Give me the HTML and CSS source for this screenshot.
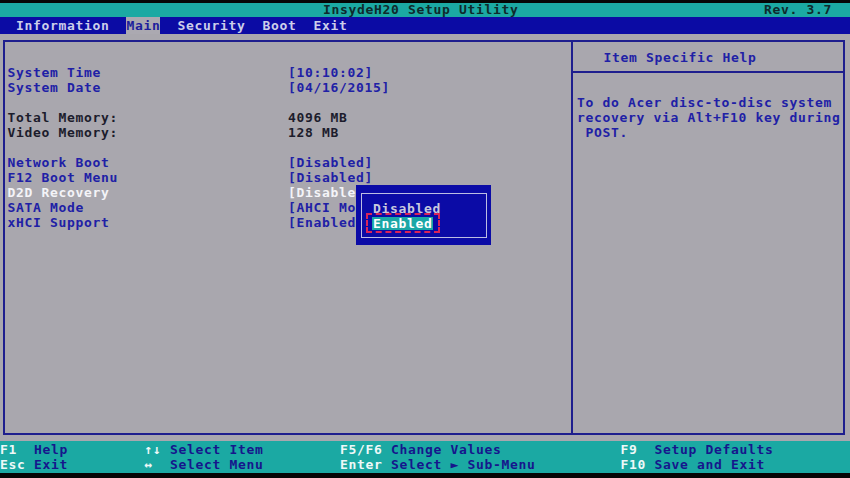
FILE: index.html
```html
<!DOCTYPE html>
<html>
<head>
<meta charset="utf-8">
<title>InsydeH20 Setup Utility</title>
<link rel="stylesheet" href="styles.css">
</head>
<body>
<div class="screen">
  <div class="edge-top"></div>
  <header class="titlebar">
    <span class="title">InsydeH20 Setup Utility</span>
    <span class="rev">Rev. 3.7</span>
  </header>
  <nav class="menubar">
    <span class="menu-item">Information</span>
    <span class="menu-item active">Main</span>
    <span class="menu-item">Security</span>
    <span class="menu-item">Boot</span>
    <span class="menu-item">Exit</span>
  </nav>
  <main class="workspace">
    <div class="frame">
      <section class="settings">
        <div class="group">
          <div class="row"><span class="label">System Time</span><span class="value">[10:10:02]</span></div>
          <div class="row"><span class="label">System Date</span><span class="value">[04/16/2015]</span></div>
        </div>
        <div class="group info">
          <div class="row"><span class="label">Total Memory:</span><span class="value">4096 MB</span></div>
          <div class="row"><span class="label">Video Memory:</span><span class="value">128 MB</span></div>
        </div>
        <div class="group">
          <div class="row"><span class="label">Network Boot</span><span class="value">[Disabled]</span></div>
          <div class="row"><span class="label">F12 Boot Menu</span><span class="value">[Disabled]</span></div>
          <div class="row selected"><span class="label">D2D Recovery</span><span class="value">[Disabled]</span></div>
          <div class="row"><span class="label">SATA Mode</span><span class="value">[AHCI Mode]</span></div>
          <div class="row"><span class="label">xHCI Support</span><span class="value">[Enabled]</span></div>
        </div>
        <div class="popup">
          <div class="popup-inner">
            <div class="option"><span class="opt-text">Disabled</span></div>
            <div class="option"><span class="opt-text current">Enabled</span></div>
          </div>
        </div>
      </section>
      <aside class="help">
        <div class="help-head">Item Specific Help</div>
        <div class="help-text">
          <div>To do Acer disc-to-disc system</div>
          <div>recovery via Alt+F10 key during</div>
          <div class="indent">POST.</div>
        </div>
      </aside>
    </div>
  </main>
  <footer class="keys">
    <span class="key">F1</span><span class="desc">Help</span>
    <span class="key">↑↓</span><span class="desc">Select Item</span>
    <span class="key">F5/F6</span><span class="desc">Change Values</span>
    <span class="key">F9</span><span class="desc">Setup Defaults</span>
    <span class="key">Esc</span><span class="desc">Exit</span>
    <span class="key">↔</span><span class="desc">Select Menu</span>
    <span class="key">Enter</span><span class="desc">Select ► Sub-Menu</span>
    <span class="key">F10</span><span class="desc">Save and Exit</span>
  </footer>
  <div class="edge-bottom"></div>
</div>
</body>
</html>
```

FILE: styles.css
```css
* {
  box-sizing: border-box;
  margin: 0;
  padding: 0;
}

html, body {
  width: 850px;
  height: 478px;
  overflow: hidden;
  background: #000;
}

body {
  font-family: "DejaVu Sans Mono", "Liberation Mono", monospace;
  font-size: 13px;
  font-weight: bold;
  letter-spacing: 0.67px;
  line-height: 15px;
  white-space: nowrap;
}

.screen {
  display: flex;
  flex-direction: column;
  width: 850px;
  height: 478px;
}

.edge-top {
  height: 3px;
  flex: none;
  background: #060606;
}

.edge-bottom {
  height: 5px;
  flex: none;
  background: #060606;
}

.titlebar {
  height: 14px;
  flex: none;
  line-height: 14px;
  background: #1ba9a3;
  color: #0f2a2c;
  display: flex;
  justify-content: space-between;
  padding: 0 18px 0 323px;
}

.menubar {
  height: 17px;
  flex: none;
  line-height: 17px;
  background: #0b0ba4;
  color: #ccceea;
  display: flex;
  gap: 17px;
  padding-left: 16px;
}

.menu-item.active {
  background: #aba9b1;
  color: #1d1d9c;
}

.workspace {
  height: 407px;
  flex: none;
  background: #a9a7ae;
  padding: 6px 5px 6px 3px;
}

.frame {
  height: 395px;
  border: 2px solid #1e1e8e;
  display: flex;
}

.settings {
  position: relative;
  width: 568px;
  flex: none;
  border-right: 2px solid #1e1e8e;
  padding: 23px 0 0 2.5px;
  display: flex;
  flex-direction: column;
  gap: 15px;
  color: #2020a6;
}

.row {
  display: flex;
  height: 15px;
}

.label {
  width: 280.5px;
  flex: none;
}

.info .row {
  color: #1c1c2c;
}

.row.selected {
  color: #f4f4f8;
}

.popup {
  position: absolute;
  left: 351px;
  top: 143px;
  width: 135px;
  height: 60px;
  background: #0b0ba6;
  padding: 8px 4px 7px 5px;
}

.popup-inner {
  height: 100%;
  border: 1px solid #bcbde2;
  padding: 6.5px 0 0 10px;
}

.option {
  height: 15px;
  display: flex;
  align-items: center;
}

.opt-text {
  display: inline-block;
  height: 13px;
  line-height: 13px;
  padding: 0 1px;
  color: #c8c9de;
}

.opt-text.current {
  position: relative;
  background: #1aa7a6;
  color: #ffffff;
}

.opt-text.current::before {
  content: "";
  position: absolute;
  left: -6px;
  right: -7px;
  top: -4px;
  bottom: -3px;
  border: 2px dashed #d8245a;
}

.help {
  flex: 1;
  padding-top: 8px;
  color: #2020a6;
}

.help-head {
  height: 23px;
  padding-left: 30.5px;
  border-bottom: 2px solid #1e1e8e;
}

.help-text {
  margin-top: 22px;
  padding-left: 4px;
}

.help-text .indent {
  padding-left: 8.5px;
}

.keys {
  height: 32px;
  flex: none;
  background: #1ba9a3;
  padding-top: 1px;
  display: grid;
  grid-template-columns: 34px 110.5px 25.5px 170px 51px 229.5px 34px auto;
  grid-auto-rows: 15px;
}

.key {
  color: #eef8f8;
}

.desc {
  color: #16168c;
}
```
